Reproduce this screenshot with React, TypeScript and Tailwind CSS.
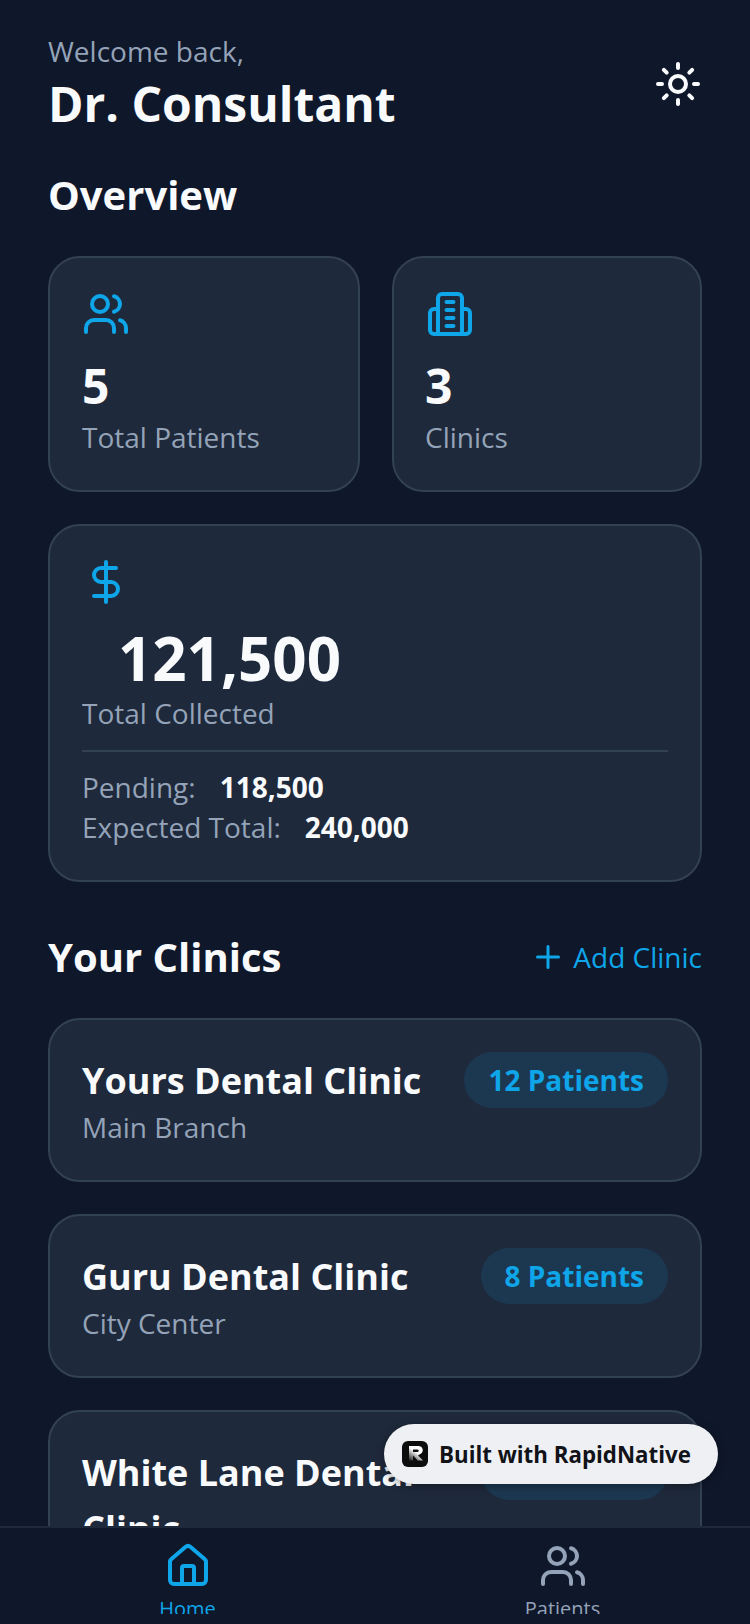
import { DollarSign, House, Plus, Sun, Users } from "lucide-react";

const font = "font-['Open_Sans','Noto_Sans',sans-serif]";

function BuildingIcon({ className }: { className?: string }) {
  return (
    <svg viewBox="0 0 48 48" fill="none" stroke="currentColor" strokeWidth="4" strokeLinecap="round" strokeLinejoin="round" className={className}>
      <path d="M12 44V8a4 4 0 0 1 4-4h16a4 4 0 0 1 4 4v36" />
      <path d="M12 19H8a4 4 0 0 0-4 4v17a4 4 0 0 0 4 4h32a4 4 0 0 0 4-4V23a4 4 0 0 0-4-4h-4" />
      <path d="M12 44h24" />
      <path d="M20.5 12h7M20.5 20h7M20.5 28h7M20.5 36h7" />
    </svg>
  );
}

function StatCard({ icon, value, label, className }: { icon: React.ReactNode; value: string; label: string; className: string }) {
  return (
    <div className={`${className} h-[236px] rounded-[32px] border-2 border-[#334155] bg-[#1e293b] px-[32px] pt-[32px]`}>
      <div className="h-[48px]">{icon}</div>
      <div className="mt-[16px] text-[48px] leading-[64px] font-bold text-[#f8fafc]">{value}</div>
      <div className="text-[28px] leading-[38px] text-[#94a3b8]">{label}</div>
    </div>
  );
}

function ClinicCard({ name, branch, patients }: { name: string; branch?: string; patients: string }) {
  return (
    <div className="rounded-[32px] border-2 border-[#334155] bg-[#1e293b] p-[32px] pb-[35px] flex items-start justify-between gap-[40px]">
      <div className="flex-1 min-w-0">
        <div className="mt-[1px] text-[36px] leading-[56px] font-bold text-[#f8fafc]">{name}</div>
        {branch && <div className="text-[28px] leading-[36px] text-[#94a3b8]">{branch}</div>}
      </div>
      <div className="shrink-0 h-[56px] rounded-full bg-[#0ea5e9]/13 px-[24px] flex items-center text-[28px] font-bold text-[#0ea5e9]">
        {patients}
      </div>
    </div>
  );
}

function NavItem({ icon, label, active }: { icon: React.ReactNode; label: string; active?: boolean }) {
  return (
    <div className={`flex-1 flex flex-col items-center pt-[14px] ${active ? "text-[#0ea5e9]" : "text-[#94a3b8]"}`}>
      {icon}
      <div className="mt-[5px] h-[19px] overflow-hidden text-[20px] leading-[28px]">{label}</div>
    </div>
  );
}

export default function App() {
  return (
    <div className={`${font} relative h-[1624px] w-[750px] overflow-hidden bg-[#0f172a] flex flex-col`}>
      <main className="flex-1 min-h-0 overflow-hidden px-[48px] pt-[31px]">
        {/* Header */}
        <div className="flex items-center justify-between">
          <div>
            <div className="text-[28px] leading-[40px] text-[#94a3b8]">Welcome back,</div>
            <div className="mt-[1px] text-[48px] leading-[64px] font-bold text-[#f8fafc]">Dr. Consultant</div>
          </div>
          <Sun className="w-[48px] h-[48px] text-[#f8fafc]" strokeWidth={2} />
        </div>

        <div className="mt-[31px] text-[40px] leading-[56px] font-bold text-[#f8fafc]">Overview</div>

        {/* Stats */}
        <div className="mt-[33px] flex gap-[32px]">
          <StatCard className="w-[312px]" icon={<Users className="w-[48px] h-[48px] text-[#0ea5e9]" strokeWidth={2} />} value="5" label="Total Patients" />
          <StatCard className="flex-1 pl-[31px]" icon={<BuildingIcon className="ml-[1px] w-[48px] h-[48px] text-[#0ea5e9]" />} value="3" label="Clinics" />
        </div>

        <div className="mt-[32px] rounded-[32px] border-2 border-[#334155] bg-[#1e293b] px-[32px] pt-[32px] h-[358px]">
          <DollarSign className="w-[48px] h-[48px] text-[#0ea5e9]" strokeWidth={2} />
          <div className="mt-[15px] ml-[36px] text-[60px] leading-[74px] font-bold text-[#f8fafc]">121,500</div>
          <div className="text-[28px] leading-[36px] text-[#94a3b8]">Total Collected</div>
          <div className="mt-[19px] h-[2px] bg-[#334155]" />
          <div className="mt-[15px] flex items-center gap-[24px] h-[40px]">
            <span className="text-[28px] text-[#94a3b8]">Pending:</span>
            <span className="text-[28px] font-bold text-[#f8fafc]">118,500</span>
          </div>
          <div className="flex items-center gap-[24px] h-[40px]">
            <span className="text-[28px] text-[#94a3b8]">Expected Total:</span>
            <span className="text-[28px] font-bold text-[#f8fafc]">240,000</span>
          </div>
        </div>

        <div className="mt-[47px] flex items-center justify-between">
          <div className="text-[40px] leading-[56px] font-bold text-[#f8fafc]">Your Clinics</div>
          <div className="flex items-center gap-[7px] text-[#0ea5e9]">
            <Plus className="w-[36px] h-[36px]" strokeWidth={2} />
            <span className="text-[28px]">Add Clinic</span>
          </div>
        </div>

        <div className="mt-[33px] flex flex-col gap-[32px]">
          <ClinicCard name="Yours Dental Clinic" branch="Main Branch" patients="12 Patients" />
          <ClinicCard name="Guru Dental Clinic" branch="City Center" patients="8 Patients" />
          <ClinicCard name="White Lane Dental Clinic" branch="Downtown" patients="5 Patients" />
        </div>
      </main>

      {/* Tab bar */}
      <nav className="h-[98px] shrink-0 overflow-hidden border-t-2 border-[#1e293b] bg-[#0f172a] flex">
        <NavItem icon={<House className="w-[48px] h-[48px]" strokeWidth={2} />} label="Home" active />
        <NavItem icon={<Users className="w-[48px] h-[48px]" strokeWidth={2} />} label="Patients" />
      </nav>

      {/* Floating badge */}
      <div className="absolute left-[384px] top-[1424px] h-[60px] w-[334px] rounded-full bg-[#eef0f4] shadow-[0_2px_10px_rgba(0,0,0,0.35)] flex items-center pl-[18px] gap-[11px]">
        <div className="w-[26px] h-[26px] rounded-[6px] bg-[#0d0d0d]">
          <svg viewBox="0 0 26 26" className="w-[26px] h-[26px]">
            <defs>
              <linearGradient id="rn-r" x1="0.1" y1="1" x2="0.5" y2="0.4">
                <stop offset="0" stopColor="#2a2a2a" />
                <stop offset="1" stopColor="#ffffff" />
              </linearGradient>
            </defs>
            <path
              fillRule="evenodd"
              fill="url(#rn-r)"
              d="M7 5h9.5a4.2 4.2 0 0 1 2.6 7.5L16 14.5 21 19.5h-5.2L11 14.5V19.5H7z M11 8.5v2.6h4.4a1.3 1.3 0 0 0 0-2.6z"
            />
          </svg>
        </div>
        <span className="mt-[1px] text-[22.3px] font-bold text-[#111318]">Built with RapidNative</span>
      </div>
    </div>
  );
}
